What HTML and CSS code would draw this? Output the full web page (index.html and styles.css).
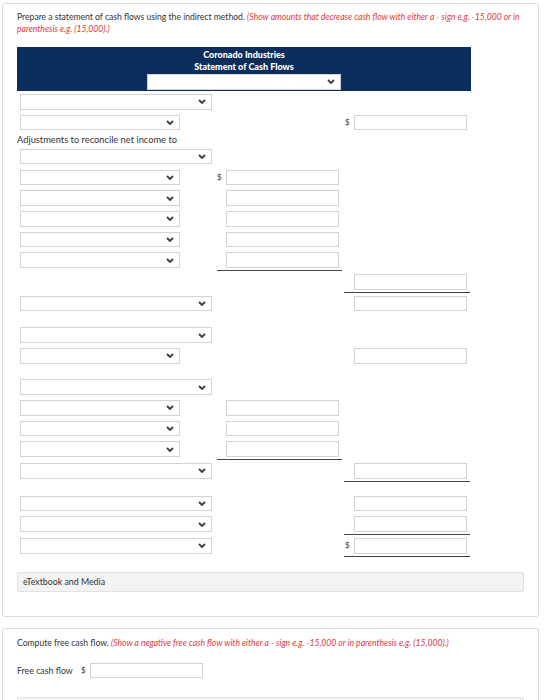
FILE: index.html
```html
<!DOCTYPE html>
<html>
<head>
<meta charset="utf-8">
<link rel="stylesheet" href="styles.css">
</head>
<body>
<div class="card">
  <p class="instr">Prepare a statement of cash flows using the indirect method. <em>(Show amounts that decrease cash flow with either a - sign e.g. -15,000 or in parenthesis e.g. (15,000).)</em></p>
  <div class="sheet">
    <div class="head">
      <div class="t">Coronado Industries</div>
      <div class="t">Statement of Cash Flows</div>
      <div class="sel hsel"><svg width="8" height="5" viewBox="0 0 8 5"><polyline points="1,1 4,4 7,1" /></svg></div>
    </div>
    <div class="rows">
      <div class="row"><div class="c1"><div class="sel w"><svg width="8" height="5" viewBox="0 0 8 5"><polyline points="1,1 4,4 7,1" /></svg></div></div><div class="c2"></div><div class="c3"></div></div>
      <div class="row"><div class="c1"><div class="sel n"><svg width="8" height="5" viewBox="0 0 8 5"><polyline points="1,1 4,4 7,1" /></svg></div></div><div class="c2"></div><div class="c3"><span class="d">$</span><input class="inp" type="text"></div></div>
      <div class="label">Adjustments to reconcile net income to</div>
      <div class="row"><div class="c1"><div class="sel w"><svg width="8" height="5" viewBox="0 0 8 5"><polyline points="1,1 4,4 7,1" /></svg></div></div><div class="c2"></div><div class="c3"></div></div>
      <div class="row"><div class="c1"><div class="sel n"><svg width="8" height="5" viewBox="0 0 8 5"><polyline points="1,1 4,4 7,1" /></svg></div></div><div class="c2"><span class="d">$</span><input class="inp" type="text"></div><div class="c3"></div></div>
      <div class="row"><div class="c1"><div class="sel n"><svg width="8" height="5" viewBox="0 0 8 5"><polyline points="1,1 4,4 7,1" /></svg></div></div><div class="c2"><span class="d"></span><input class="inp" type="text"></div><div class="c3"></div></div>
      <div class="row"><div class="c1"><div class="sel n"><svg width="8" height="5" viewBox="0 0 8 5"><polyline points="1,1 4,4 7,1" /></svg></div></div><div class="c2"><span class="d"></span><input class="inp" type="text"></div><div class="c3"></div></div>
      <div class="row"><div class="c1"><div class="sel n"><svg width="8" height="5" viewBox="0 0 8 5"><polyline points="1,1 4,4 7,1" /></svg></div></div><div class="c2"><span class="d"></span><input class="inp" type="text"></div><div class="c3"></div></div>
      <div class="row u"><div class="c1"><div class="sel n"><svg width="8" height="5" viewBox="0 0 8 5"><polyline points="1,1 4,4 7,1" /></svg></div></div><div class="c2 ul"><span class="d"></span><input class="inp" type="text"></div><div class="c3"></div></div>
      <div class="row u"><div class="c1"></div><div class="c2"></div><div class="c3 ul"><span class="d"></span><input class="inp" type="text"></div></div>
      <div class="row"><div class="c1"><div class="sel w"><svg width="8" height="5" viewBox="0 0 8 5"><polyline points="1,1 4,4 7,1" /></svg></div></div><div class="c2"></div><div class="c3"><span class="d"></span><input class="inp" type="text"></div></div>
      <div class="spacer"></div>
      <div class="row"><div class="c1"><div class="sel w"><svg width="8" height="5" viewBox="0 0 8 5"><polyline points="1,1 4,4 7,1" /></svg></div></div><div class="c2"></div><div class="c3"></div></div>
      <div class="row"><div class="c1"><div class="sel n"><svg width="8" height="5" viewBox="0 0 8 5"><polyline points="1,1 4,4 7,1" /></svg></div></div><div class="c2"></div><div class="c3"><span class="d"></span><input class="inp" type="text"></div></div>
      <div class="spacer s2"></div>
      <div class="row"><div class="c1"><div class="sel w"><svg width="8" height="5" viewBox="0 0 8 5"><polyline points="1,1 4,4 7,1" /></svg></div></div><div class="c2"></div><div class="c3"></div></div>
      <div class="row"><div class="c1"><div class="sel n"><svg width="8" height="5" viewBox="0 0 8 5"><polyline points="1,1 4,4 7,1" /></svg></div></div><div class="c2"><span class="d"></span><input class="inp" type="text"></div><div class="c3"></div></div>
      <div class="row"><div class="c1"><div class="sel n"><svg width="8" height="5" viewBox="0 0 8 5"><polyline points="1,1 4,4 7,1" /></svg></div></div><div class="c2"><span class="d"></span><input class="inp" type="text"></div><div class="c3"></div></div>
      <div class="row u"><div class="c1"><div class="sel n"><svg width="8" height="5" viewBox="0 0 8 5"><polyline points="1,1 4,4 7,1" /></svg></div></div><div class="c2 ul"><span class="d"></span><input class="inp" type="text"></div><div class="c3"></div></div>
      <div class="row u"><div class="c1"><div class="sel w"><svg width="8" height="5" viewBox="0 0 8 5"><polyline points="1,1 4,4 7,1" /></svg></div></div><div class="c2"></div><div class="c3 ul"><span class="d"></span><input class="inp" type="text"></div></div>
      <div class="spacer"></div>
      <div class="row"><div class="c1"><div class="sel w"><svg width="8" height="5" viewBox="0 0 8 5"><polyline points="1,1 4,4 7,1" /></svg></div></div><div class="c2"></div><div class="c3"><span class="d"></span><input class="inp" type="text"></div></div>
      <div class="row u"><div class="c1"><div class="sel w"><svg width="8" height="5" viewBox="0 0 8 5"><polyline points="1,1 4,4 7,1" /></svg></div></div><div class="c2"></div><div class="c3 ul"><span class="d"></span><input class="inp" type="text"></div></div>
      <div class="row u"><div class="c1"><div class="sel w"><svg width="8" height="5" viewBox="0 0 8 5"><polyline points="1,1 4,4 7,1" /></svg></div></div><div class="c2"></div><div class="c3 ul"><span class="d">$</span><input class="inp" type="text"></div></div>
    </div>
  </div>
  <div class="media">eTextbook and Media</div>
</div>
<div class="card card2">
  <p class="instr">Compute free cash flow. <em>(Show a negative free cash flow with either a - sign e.g. -15,000 or in parenthesis e.g. (15,000).)</em></p>
  <div class="fcf"><span class="fl">Free cash flow</span><span class="d">$</span><input class="inp" type="text"></div>
  <div class="media m2"></div>
</div>
</body>
</html>
```
FILE: styles.css
```css
* { box-sizing: border-box; }
body {
  margin: 0;
  font-family: Lato, "Liberation Sans", sans-serif;
  color: #333;
  background: #fff;
}
.card {
  margin: 3px 0 0 2px;
  width: 537px;
  border: 1px solid #dcdcdc;
  border-radius: 3px;
  padding: 7px 14px 24px;
}
.card2 {
  margin-top: 11px;
  padding-top: 8px;
  padding-bottom: 0;
  height: 80px;
  border-bottom: none;
}
.instr {
  margin: 0;
  font-size: 8.6px;
  line-height: 12px;
  color: #333;
}
.instr em {
  color: #e0393e;
}
.sheet {
  margin-top: 12px;
  width: 454px;
}
.head {
  background: #0b2e5c;
  color: #fff;
  text-align: center;
  padding-top: 2px;
  height: 44px;
}
.head .t {
  font-weight: 900;
  font-size: 9px;
  line-height: 11.5px;
}
.sel {
  height: 15.5px;
  border: 1px solid #d4d4d4;
  background: #fff;
  display: flex;
  align-items: center;
  justify-content: flex-end;
  padding-right: 5px;
}
.sel svg polyline {
  fill: none;
  stroke: #3d3d3d;
  stroke-width: 1.8;
}
.hsel {
  margin: 2px auto 0;
  width: 194px;
}
.sel.w { width: 192px; }
.sel.n { width: 160px; }
.rows { padding-top: 3px; }
.row {
  display: grid;
  grid-template-columns: 200px 127px 127px;
  height: 20.7px;
  align-items: start;
}
.row.u { height: 21.7px; }
.c1 { padding-left: 3px; }
.c2, .c3 {
  display: flex;
  align-items: center;
}
.d {
  font-size: 8px;
  color: #333;
  line-height: 15.5px;
}
.c2 .d { width: 9px; }
.c3 .d { width: 10px; padding-left: 1px; }
.inp {
  display: block;
  appearance: none;
  margin: 0;
  padding: 0;
  width: 113px;
  height: 15.5px;
  border: 1px solid #d4d4d4;
  background: #fff;
  font: inherit;
}
.ul {
  padding-bottom: 2px;
  border-bottom: 1px solid #444;
}
.c2.ul { margin-right: 2px; }
.c3.ul { margin-right: 1px; }
.spacer { height: 11px; }
.spacer.s2 { height: 10.5px; }
.label {
  font-size: 9.3px;
  line-height: 9px;
  height: 13.6px;
}
.media {
  margin-top: 12px;
  width: 507px;
  height: 20px;
  background: #f3f3f3;
  border: 1px solid #e2e2e2;
  border-radius: 2px;
  padding-left: 5px;
  font-size: 8.8px;
  line-height: 18px;
  color: #333;
}
.fcf {
  margin-top: 14px;
  display: flex;
  align-items: center;
  height: 15.5px;
}
.fl {
  width: 64px;
  font-size: 8.8px;
}
.fcf .d { width: 9px; }
.m2 { margin-top: 18.5px; }
```
